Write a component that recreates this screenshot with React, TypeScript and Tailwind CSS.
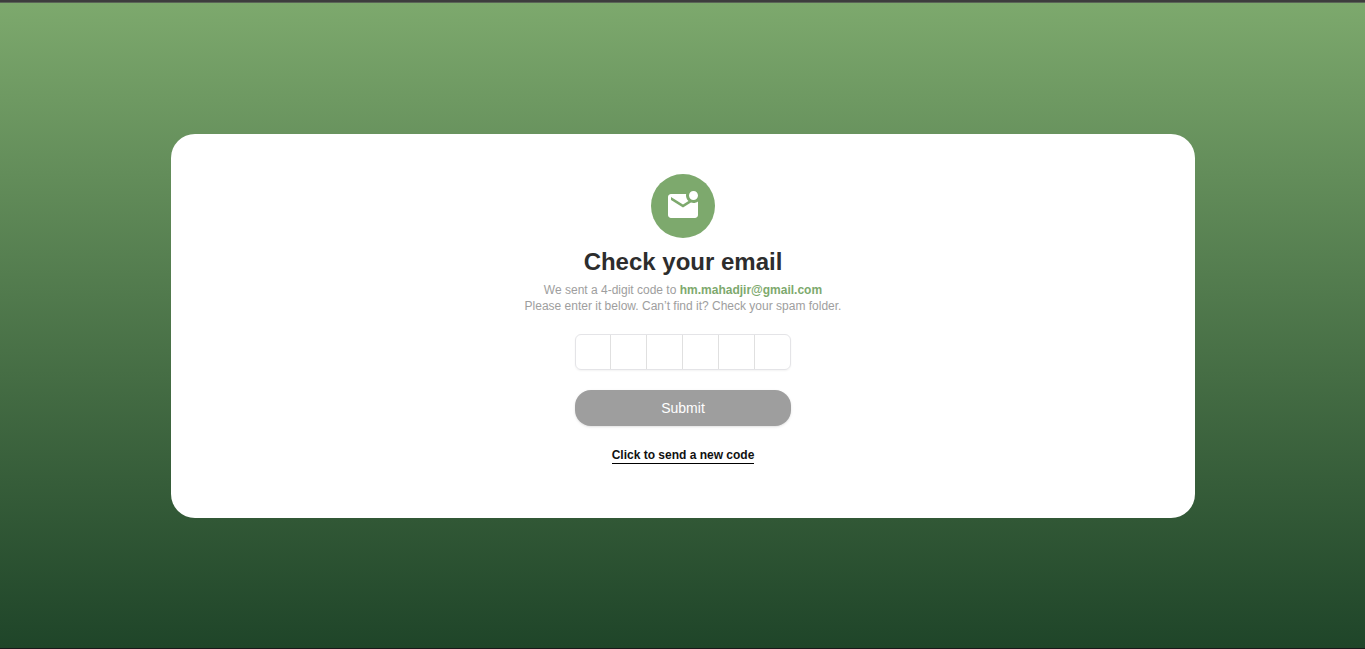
import { MdMarkEmailUnread } from "react-icons/md";

const CODE_LENGTH = 6;

export default function App() {
  return (
    <div className="flex h-[649px] w-full flex-col border-t-2 border-b border-t-[#3d3d3d] border-b-[#1a1a1a] bg-linear-to-b from-[#7da96d] to-[#1f4529] font-['Liberation_Sans',Arial,sans-serif]">
      <div className="h-px shrink-0 bg-[#5a6456]" />
      <main className="mt-[131px] ml-[171px] flex h-96 w-[1024px] flex-col items-center rounded-3xl bg-white pt-10">
        <div className="flex size-16 shrink-0 items-center justify-center rounded-full bg-[#7da96d] text-white">
          <MdMarkEmailUnread size={36} />
        </div>
        <h1 className="mt-2 text-2xl leading-8 font-bold text-[#2d2d2d]">Check your email</h1>
        <p className="mt-1 text-center text-xs text-[#9e9e9e]">
          We sent a 4-digit code to <span className="font-bold text-[#7da96d]">hm.mahadjir@gmail.com</span>
          <br />
          Please enter it below. Can’t find it? Check your spam folder.
        </p>
        <div className="mt-5 flex h-9 w-[216px] overflow-hidden rounded-md border border-[#e4e4e7] shadow-xs">
          {Array.from({ length: CODE_LENGTH }, (_, i) => (
            <input
              key={i}
              aria-label={`Digit ${i + 1}`}
              maxLength={1}
              className="h-full w-9 shrink-0 border-r border-[#e0e0e0] text-center text-sm outline-none first:w-[35px] last:w-[35px] last:border-r-0"
            />
          ))}
        </div>
        <button className="mt-5 h-9 w-[216px] rounded-2xl bg-[#9e9e9e] text-sm text-white shadow-sm">Submit</button>
        <button className="mt-[21px] border-b border-black text-xs leading-4 font-bold text-[#111111]">
          Click to send a new code
        </button>
      </main>
    </div>
  );
}
